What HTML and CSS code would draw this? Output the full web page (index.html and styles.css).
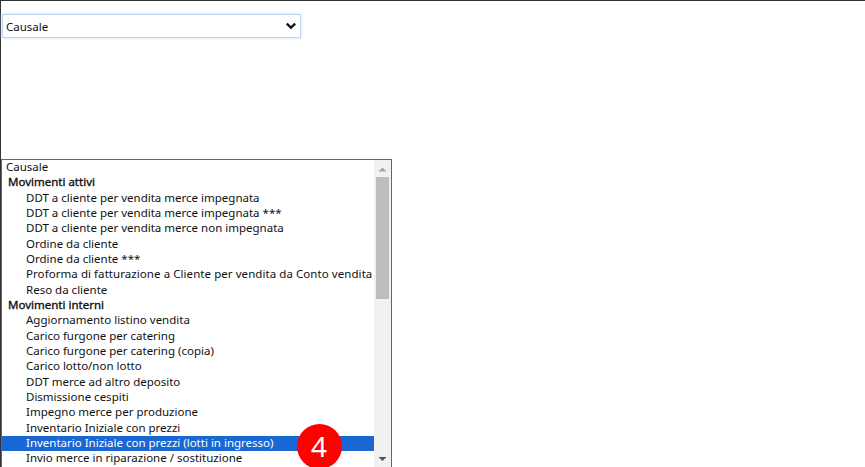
FILE: index.html
```html
<!DOCTYPE html>
<html lang="it">
<head>
<meta charset="utf-8">
<title>Causale</title>
<link rel="stylesheet" href="styles.css">
</head>
<body>
<div class="page">
  <div class="select-closed">
    <span>Causale</span>
    <svg class="chev" width="12" height="8" viewBox="0 0 12 8"><path d="M1.8 1.6 6 5.6l4.2-4" fill="none" stroke="#111" stroke-width="2.3"/></svg>
  </div>
  <div class="dropdown">
    <div class="list">
      <div class="opt">Causale</div>
      <div class="grp">Movimenti attivi</div>
      <div class="opt sub">DDT a cliente per vendita merce impegnata</div>
      <div class="opt sub">DDT a cliente per vendita merce impegnata ***</div>
      <div class="opt sub">DDT a cliente per vendita merce non impegnata</div>
      <div class="opt sub">Ordine da cliente</div>
      <div class="opt sub">Ordine da cliente ***</div>
      <div class="opt sub wide">Proforma di fatturazione a Cliente per vendita da Conto vendita</div>
      <div class="opt sub">Reso da cliente</div>
      <div class="grp">Movimenti interni</div>
      <div class="opt sub">Aggiornamento listino vendita</div>
      <div class="opt sub">Carico furgone per catering</div>
      <div class="opt sub">Carico furgone per catering (copia)</div>
      <div class="opt sub">Carico lotto/non lotto</div>
      <div class="opt sub">DDT merce ad altro deposito</div>
      <div class="opt sub">Dismissione cespiti</div>
      <div class="opt sub">Impegno merce per produzione</div>
      <div class="opt sub">Inventario Iniziale con prezzi</div>
      <div class="opt sub sel">Inventario Iniziale con prezzi (lotti in ingresso)</div>
      <div class="opt sub">Invio merce in riparazione / sostituzione</div>
    </div>
    <div class="scrollbar">
      <svg class="arrow" width="17" height="17" viewBox="0 0 17 17"><path d="M4.5 11.5h8l-4-4z" fill="#a3a3a3"/></svg>
      <div class="thumb-track"><div class="thumb"></div></div>
      <svg class="arrow" width="17" height="17" viewBox="0 0 17 17"><path d="M4.5 5h8l-4 4z" fill="#505050"/></svg>
    </div>
    <div class="badge">4</div>
  </div>
</div>
</body>
</html>
```
FILE: styles.css
```css
* { box-sizing: border-box; }
html, body { margin: 0; padding: 0; height: 100%; overflow: hidden; background: #fff; }
.page {
  height: 467px;
  border-top: 1px solid #333;
  border-left: 1px solid #333;
  padding: 13px 0 0 1px;
  font-family: "Noto Sans", sans-serif;
  font-size: 11.5px;
  color: #111;
}
.select-closed {
  width: 299px;
  height: 24px;
  display: flex;
  align-items: center;
  justify-content: space-between;
  padding: 0 3px;
  border: 1px solid #c0d3f2;
  box-shadow: 0 0 3px #c5d7f5;
}
.dropdown {
  position: relative;
  margin: 121px 0 0 -1px;
  width: 391px;
  height: 310px;
  display: flex;
  border: 1px solid #666;
  border-bottom: 0;
  overflow: hidden;
}
.list { width: 372px; flex: none; }
.opt, .grp {
  height: 15.33px;
  line-height: 14px;
  padding-left: 4px;
  white-space: nowrap;
}
.grp { font-weight: 400; padding-left: 6px; -webkit-text-stroke: 0.35px #111; }
.sub { padding-left: 24px; }
.wide { letter-spacing: 0.065px; }
.sel { background: #1967d2; color: #fff; }
.scrollbar {
  width: 17px;
  flex: none;
  display: flex;
  flex-direction: column;
  background: #f1f1f1;
}
.arrow { flex: none; display: block; }
.thumb-track { flex: 1; }
.thumb { width: 13px; height: 122px; margin-left: 2px; background: #bdbdbd; }
.badge {
  position: absolute;
  left: 295px;
  top: 264px;
  width: 45px;
  height: 45px;
  padding-right: 1px;
  border-radius: 50%;
  background: #f00;
  color: #fff;
  font-size: 28px;
  line-height: 45px;
  text-align: center;
}
```
